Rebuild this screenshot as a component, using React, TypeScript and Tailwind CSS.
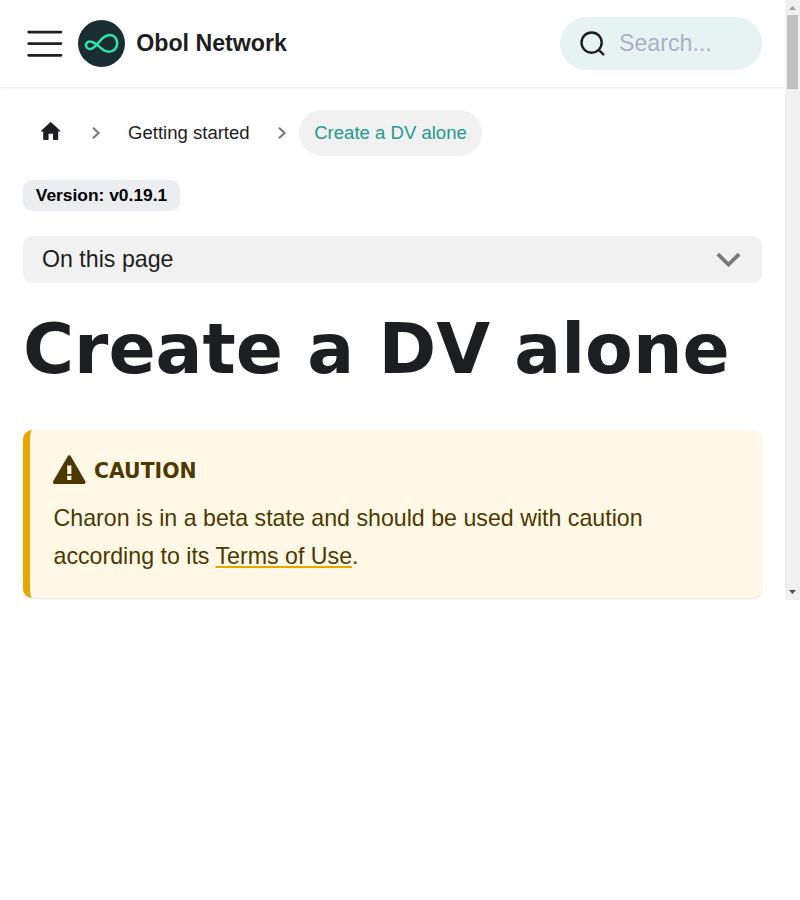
function MenuIcon() {
  return (
    <svg className="h-[47px] w-[47px] shrink-0" viewBox="0 0 47 47" fill="none" stroke="#1c1e21" strokeWidth="2.8" strokeLinecap="round" aria-hidden="true">
      <path d="M7.7 12.1h32.2M7.7 23.6h32.2M7.7 35.3h32.2" />
    </svg>
  );
}

function Logo() {
  return (
    <svg className="h-[47px] w-[47px] shrink-0" viewBox="0 0 47 47" fill="none" aria-hidden="true">
      <circle cx="23.5" cy="23.5" r="23.5" fill="#1a2d32" />
      <path
        d="M19 24.8C17 23.2 15.2 21.4 12.2 21.4C9.7 21.4 8 23.1 8 25.2C8 27.4 9.8 29 12.2 29C16.8 29 19.7 22.7 24.4 18.4C27.3 15.8 29.3 15 32 15C36.5 15 39.2 18.8 39.2 23.2C39.2 28.2 35.8 31.7 30.8 31.7C25.8 31.7 22.6 27.6 19 24.8Z"
        stroke="#2fe4ab"
        strokeWidth="2.5"
        strokeLinejoin="round"
      />
    </svg>
  );
}

function Navbar() {
  return (
    <nav className="flex h-[87px] items-center bg-white pr-[23px] pl-[21px] shadow-[0_1px_2px_0_rgba(0,0,0,0.1)]">
      <MenuIcon />
      <div className="ml-[10px] flex items-center">
        <Logo />
        <b className="mb-[2px] ml-[11.2px] text-[23.2px] leading-[38px] font-bold">Obol Network</b>
      </div>
      <div className="ml-auto flex h-[53px] w-[202px] items-center rounded-full bg-[#e7f3f3] pl-[19px]">
        <svg className="h-7 w-7 shrink-0" viewBox="0 0 28 28" fill="none" stroke="#1c1e21" strokeWidth="2.4" strokeLinecap="round" aria-hidden="true">
          <circle cx="12.6" cy="12.6" r="10.1" />
          <path d="M20 20.2l4.3 4.2" />
        </svg>
        <span className="mb-[2px] ml-[12px] text-[23.2px] leading-[38px] text-[#a9b0c8]">Search...</span>
      </div>
    </nav>
  );
}

function Separator() {
  return (
    <svg className="h-[14px] w-[10px] shrink-0" viewBox="0 0 10 14" fill="none" stroke="#7d7d7d" strokeWidth="2.2" aria-hidden="true">
      <path d="M2 1.7L7.6 7L2 12.3" />
    </svg>
  );
}

function Breadcrumbs() {
  return (
    <ul className="flex h-[46px] items-center text-[18.56px]">
      <li className="ml-[16px] flex">
        <svg className="mb-[4px] h-[24px] w-[24px]" viewBox="0 0 24 24" fill="#1c1e21" aria-hidden="true">
          <path d="M9.6 20v-5.2h4.4V20c0 .55.45 1 1 1h3.2c.55 0 1-.45 1-1v-7.5h1.7c.46 0 .68-.57.33-.87L12.37 3.4a1 1 0 0 0-1.34 0L2.07 11.63c-.34.3-.13.87.33.87h1.8V20c0 .55.45 1 1 1H8.6c.55 0 1-.45 1-1z" />
        </svg>
      </li>
      <li className="ml-[28px] flex">
        <Separator />
      </li>
      <li className="ml-[27px] w-[122px] whitespace-nowrap">Getting started</li>
      <li className="ml-[27px] flex">
        <Separator />
      </li>
      <li className="ml-[12px] flex h-[46px] w-[183px] items-center justify-center rounded-full bg-[#f1f1f1] whitespace-nowrap text-[#1f9a8d]">Create a DV alone</li>
    </ul>
  );
}

function Admonition() {
  return (
    <section className="mt-[48px] h-[168px] rounded-[9.3px] border-l-[7px] border-[#e6a700] bg-[#fff8e6] pt-[24px] pl-[23.5px] text-[#4d3800] shadow-[0_1px_2px_0_rgba(0,0,0,0.1)]">
      <div className="flex h-[31px] items-center">
        <svg className="-ml-[0.5px] h-[30px] w-[33px] shrink-0" viewBox="0 0 33 30" fill="#4d3800" aria-hidden="true">
          <path fillRule="evenodd" d="M14.6 1.4a1.9 1.9 0 0 1 3.4 0L32.3 26.2a1.8 1.8 0 0 1-1.6 2.8H1.7A1.8 1.8 0 0 1 .2 26.2zM14.2 10.6v8.3h4.2v-8.3zM14.2 20.7v4.2h4.2v-4.2z" />
        </svg>
        <h5 className="mt-[2px] ml-[8px] font-['DejaVu_Sans',sans-serif] text-[20.4px] leading-[26px] font-bold uppercase">Caution</h5>
      </div>
      <p className="mt-[14px] text-[23.2px] leading-[38px]">
        Charon is in a beta state and should be used with caution
        <br />
        according to its <a className="underline decoration-[#e6a700] decoration-2 underline-offset-[2px] [text-decoration-skip-ink:none]">Terms of Use</a>.
      </p>
    </section>
  );
}

function Scrollbar() {
  return (
    <div className="flex h-[600px] w-[15px] shrink-0 flex-col items-center bg-[#f0f0f0]">
      <svg className="h-[15px] w-[15px] shrink-0" viewBox="0 0 15 15" fill="#a3a3a3" aria-hidden="true">
        <path d="M4 10h7L7.5 6z" />
      </svg>
      <div className="h-[74px] w-[11px] bg-[#c0c0c0]" />
      <svg className="mt-auto h-[15px] w-[15px] shrink-0" viewBox="0 0 15 15" fill="#505050" aria-hidden="true">
        <path d="M4 5h7L7.5 9z" />
      </svg>
    </div>
  );
}

export default function App() {
  return (
    <div className="h-[900px] w-[800px] overflow-hidden bg-white font-['Liberation_Sans',Arial,sans-serif] text-[#1c1e21]">
      <div className="flex h-[600px]">
        <div className="h-[601px] w-[785px]">
          <Navbar />
          <main className="px-[23px] pt-[23px]">
            <Breadcrumbs />
            <span className="mt-[24px] flex h-[31px] w-[157px] items-center justify-center rounded-[9.3px] bg-[#ebedf0] text-[17.4px] font-bold text-black">Version: v0.19.1</span>
            <button className="mt-[25px] flex h-[47px] w-full items-center justify-between rounded-[9.3px] bg-[#f1f1f1] pr-[21px] pl-[19px] text-[23.2px]">
              On this page
              <svg className="h-[16px] w-[25px]" viewBox="0 0 25 16" fill="none" stroke="#7a7a7a" strokeWidth="3.8" aria-hidden="true">
                <path d="M1.9 2.2L12.5 12.5L23.1 2.2" />
              </svg>
            </button>
            <h1 className="mt-[22px] h-[77px] font-['DejaVu_Sans',sans-serif] text-[69.6px] leading-[87px] font-bold whitespace-nowrap">Create a DV alone</h1>
            <Admonition />
          </main>
        </div>
        <Scrollbar />
      </div>
    </div>
  );
}
